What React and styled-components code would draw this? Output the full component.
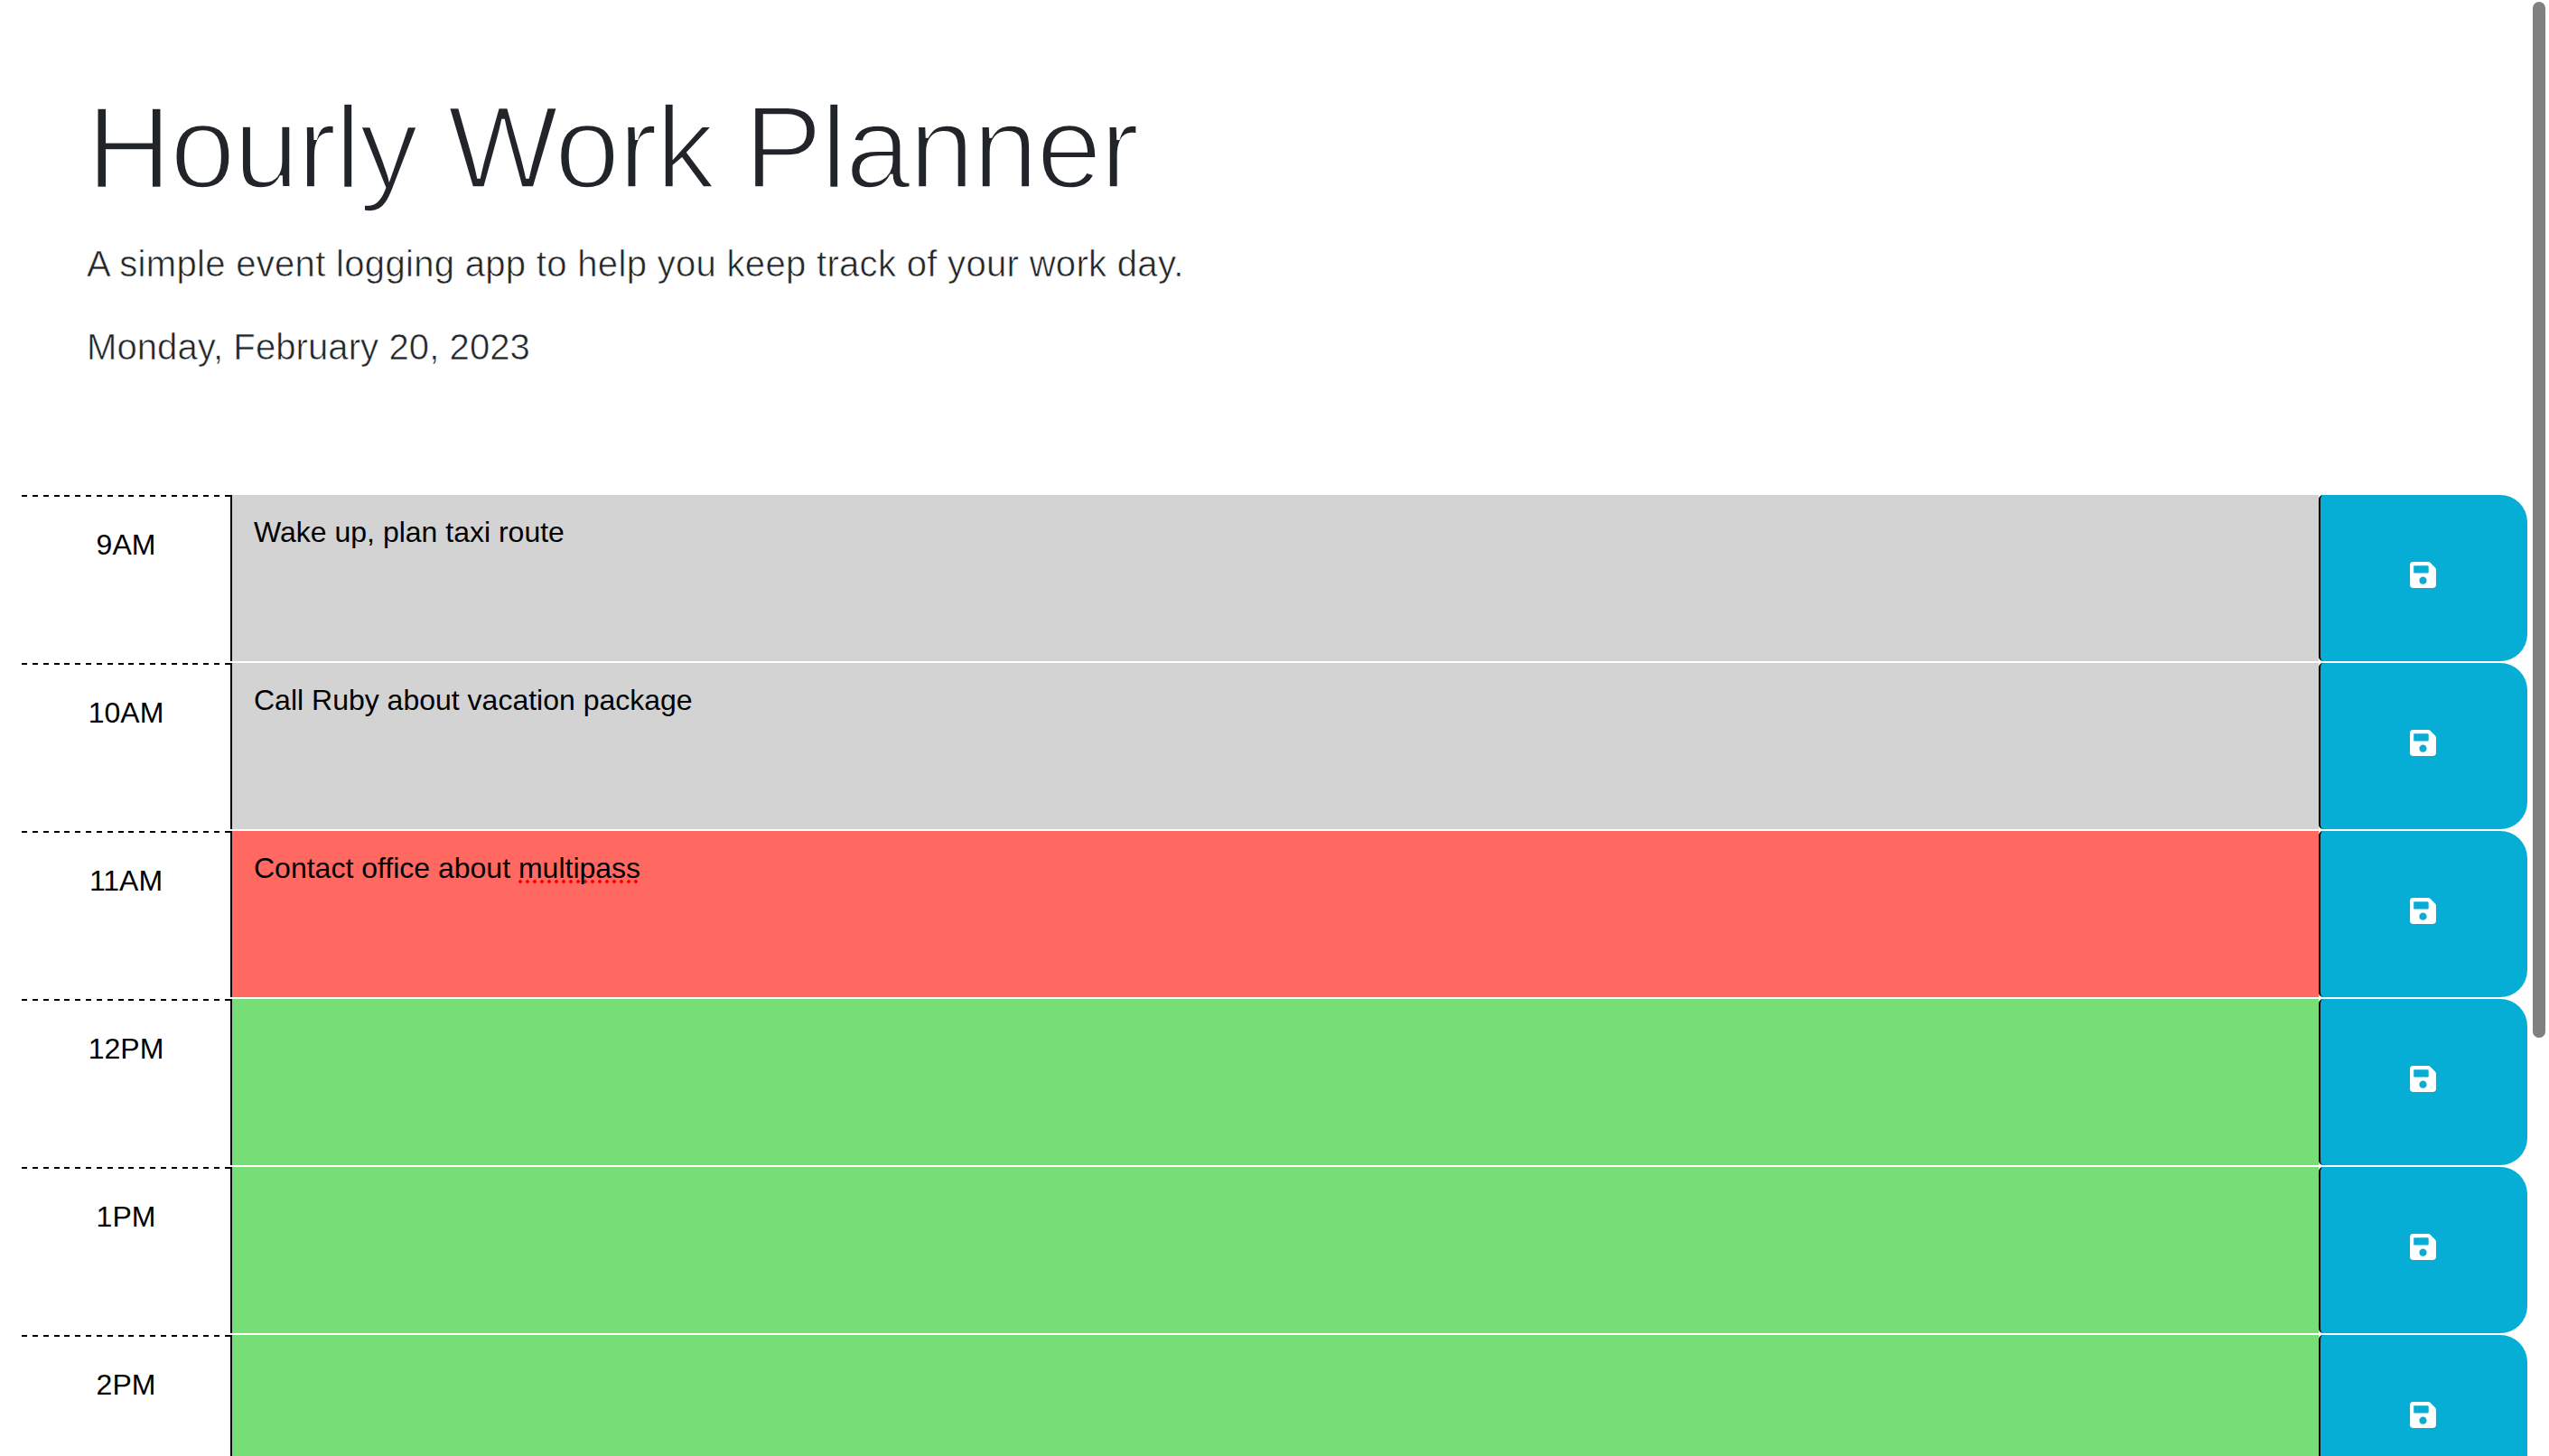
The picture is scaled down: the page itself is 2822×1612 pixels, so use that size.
import React from 'react';
import styled, { createGlobalStyle } from 'styled-components';
import { FaSave } from 'react-icons/fa';

const GlobalStyle = createGlobalStyle`
  html, body {
    margin: 0;
    height: 100%;
    overflow: hidden;
    background: #fff;
  }
  body {
    font-family: "Liberation Sans", Arial, sans-serif;
    color: #000;
  }
`;

const hours = [
  { label: '9AM', status: 'past', text: 'Wake up, plan taxi route' },
  { label: '10AM', status: 'past', text: 'Call Ruby about vacation package' },
  { label: '11AM', status: 'present', text: 'Contact office about ', flagged: 'multipass' },
  { label: '12PM', status: 'future' },
  { label: '1PM', status: 'future' },
  { label: '2PM', status: 'future' },
  { label: '3PM', status: 'future' },
  { label: '4PM', status: 'future' },
  { label: '5PM', status: 'future' },
];

const statusColors = {
  past: '#d3d3d3',
  present: '#ff6961',
  future: '#77dd77',
};

const App = () => (
  <>
    <GlobalStyle />
    <Header>
      <Title>Hourly Work Planner</Title>
      <Lead>A simple event logging app to help you keep track of your work day.</Lead>
      <DateLine>Monday, February 20, 2023</DateLine>
    </Header>
    <Planner>
      {hours.map((hour) => (
        <Row key={hour.label}>
          <Hour>{hour.label}</Hour>
          <Entry $status={hour.status}>
            {hour.text}
            {hour.flagged && <Flagged>{hour.flagged}</Flagged>}
          </Entry>
          <SaveButton aria-label="Save">
            <FaSave />
          </SaveButton>
        </Row>
      ))}
    </Planner>
    <ScrollThumb />
  </>
);

// the original is a light weight, so the regular face is thinned with a white stroke
const Header = styled.header`
  padding: 85px 96px 0;
  height: 548px;
  box-sizing: border-box;
  color: #212529;
`;

const Title = styled.h1`
  margin: 0 0 21px;
  font-size: 130px;
  font-weight: 400;
  line-height: 1.2;
  letter-spacing: -1.75px;
  -webkit-text-stroke: 3.5px #fff;
`;

const Lead = styled.p`
  margin: 0 0 32px;
  font-size: 40px;
  font-weight: 400;
  line-height: 1.5;
  letter-spacing: 0.32px;
  -webkit-text-stroke: 0.6px #fff;
`;

const DateLine = styled(Lead)`
  margin: 0;
  letter-spacing: 0.1px;
`;

const Planner = styled.main`
  margin: 0 24px;
`;

const Row = styled.section`
  display: flex;
  height: 184px;
  margin-bottom: 2px;
`;

const Hour = styled.div`
  width: 231px;
  flex: none;
  box-sizing: border-box;
  padding-top: 33px;
  background: repeating-linear-gradient(90deg, #000 0 6px, transparent 6px 11.84px) top left / 100% 2px no-repeat;
  font-size: 32px;
  line-height: 44px;
  text-align: center;
`;

const Entry = styled.div`
  flex: 1;
  box-sizing: border-box;
  isolation: isolate;
  border-left: 2px solid #000;
  padding: 19px 24px;
  background: ${(props) => statusColors[props.$status]};
  font-size: 32px;
  line-height: 44px;
`;

// spell check squiggle, sits behind the text so descenders cross it
const Flagged = styled.span`
  position: relative;

  &::after {
    content: '';
    position: absolute;
    left: 0;
    right: 0;
    bottom: 1px;
    height: 4px;
    z-index: -1;
    background: radial-gradient(circle, #f00 1.6px, transparent 2.1px) -2px 0 / 8px 4px repeat-x;
  }
`;

const SaveButton = styled.button`
  width: 231px;
  flex: none;
  display: flex;
  align-items: center;
  justify-content: center;
  padding: 0 2px 8px 0;
  border: none;
  border-left: 2px solid #000;
  border-radius: 5px 30px 30px 5px;
  background: #06aed5;
  color: #fff;
  font-size: 33px;
`;

const ScrollThumb = styled.div`
  position: fixed;
  top: 2px;
  right: 4px;
  width: 14px;
  height: 1147px;
  border-radius: 7px;
  background: #808080;
`;

export default App;
